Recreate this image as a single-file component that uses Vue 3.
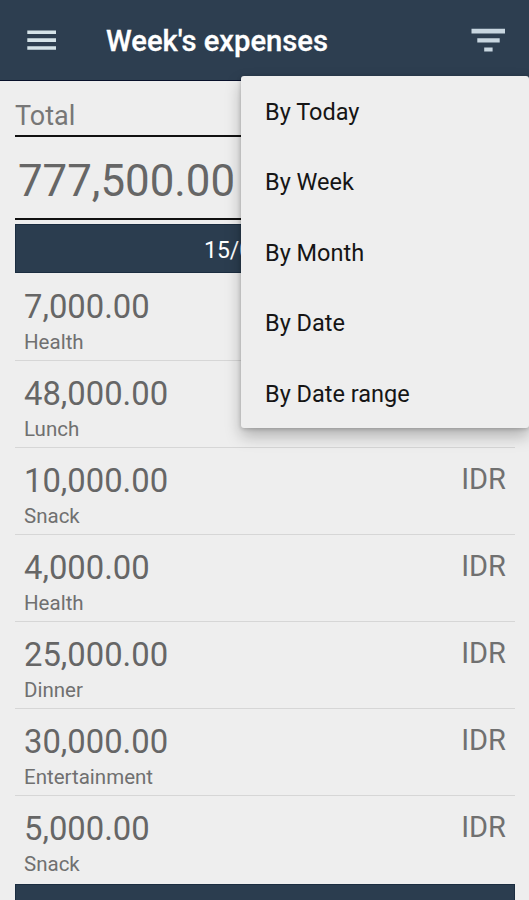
<script setup>
  import { ref } from 'vue';

  const showMenu = ref(true);

  const filters = ['By Today', 'By Week', 'By Month', 'By Date', 'By Date range'];

  const total = '777,500.00';
  const date = '15/0';

  const expenses = ref([
    { id: 1, amount: '7,000.00', category: 'Health', currency: '' },
    { id: 2, amount: '48,000.00', category: 'Lunch', currency: '' },
    { id: 3, amount: '10,000.00', category: 'Snack', currency: 'IDR' },
    { id: 4, amount: '4,000.00', category: 'Health', currency: 'IDR' },
    { id: 5, amount: '25,000.00', category: 'Dinner', currency: 'IDR' },
    { id: 6, amount: '30,000.00', category: 'Entertainment', currency: 'IDR' },
    { id: 7, amount: '5,000.00', category: 'Snack', currency: 'IDR' }
  ]);

  const toggleMenu = () => {
    showMenu.value = !showMenu.value;
  };
</script>

<template>
  <div class="app">
    <header class="toolbar">
      <button class="icon-button nav-button">
        <svg viewBox="0 0 30 22" width="30" height="22">
          <path fill="#d5e3e8" d="M0.3 1.5h28.7v3.6h-28.7zM0.3 9.3h28.7v3.6h-28.7zM0.3 17.2h28.7v3.6h-28.7z" />
        </svg>
      </button>
      <h1 class="title">Week's expenses</h1>
      <button class="icon-button" @click="toggleMenu">
        <svg viewBox="0 0 34 24" width="34" height="24">
          <path fill="#c8d6e0" d="M0.5 0.8h33.5v4.6h-33.5zM6.3 10.2h22.4v4.3h-22.4zM13.2 19.6h8.4v3.9h-8.4z" />
        </svg>
      </button>
    </header>

    <main class="content">
      <div class="total-label">Total</div>
      <div class="total-amount">{{ total }}</div>
      <div class="date-bar">{{ date }}</div>
      <ul class="expense-list">
        <li v-for="item in expenses" :key="item.id" class="expense">
          <div class="expense-info">
            <span class="amount">{{ item.amount }}</span>
            <span class="category">{{ item.category }}</span>
          </div>
          <span class="currency">{{ item.currency }}</span>
        </li>
      </ul>
      <div class="date-bar"></div>
    </main>

    <ul v-if="showMenu" class="menu">
      <li v-for="filter in filters" :key="filter" class="menu-item" @click="toggleMenu">
        {{ filter }}
      </li>
    </ul>
  </div>
</template>

<style>
  body {
    margin: 0;
    background: #eeeeee;
  }
</style>

<style scoped>
  .app {
    position: relative;
    height: 900px;
    overflow: hidden;
    background: #eeeeee;
    font-family: Roboto, sans-serif;
    color: #666666;
  }

  .toolbar {
    display: flex;
    align-items: center;
    box-sizing: border-box;
    height: 81px;
    padding: 0 24px 0 27px;
    background: #2d3e50;
    border-bottom: 1px solid #08102a;
  }

  .icon-button {
    display: flex;
    padding: 0;
    border: none;
    background: none;
    cursor: pointer;
  }

  .nav-button {
    margin-right: 49px;
  }

  .title {
    flex: 1;
    margin: 2px 0 0;
    font-size: 29.2px;
    line-height: 34px;
    font-weight: 500;
    color: #ffffff;
    -webkit-text-stroke: 0.3px #ffffff;
  }

  .content {
    padding: 0 14px 0 15px;
  }

  .total-label {
    box-sizing: border-box;
    height: 56px;
    padding-top: 18px;
    font-size: 27px;
    line-height: 34px;
    color: #777777;
    border-bottom: 2px solid #111111;
  }

  .total-amount {
    box-sizing: border-box;
    height: 83px;
    padding: 17px 0 0 3px;
    font-size: 43.8px;
    line-height: 54px;
    border-bottom: 2px solid #111111;
  }

  .date-bar {
    box-sizing: border-box;
    height: 49px;
    margin-top: 4px;
    padding-left: 188px;
    font-size: 23px;
    line-height: 51px;
    color: #ffffff;
    background: #2b3d4f;
    border: 1px solid #1b2d40;
  }

  .expense-list {
    margin: 0;
    padding: 1px 0 0;
    list-style: none;
  }

  .expense {
    display: flex;
    justify-content: space-between;
    box-sizing: border-box;
    height: 87px;
    padding: 12px 9px 0 9px;
    border-bottom: 1px solid #d6d6d6;
  }

  .expense:last-child {
    height: 84px;
    border-bottom: none;
  }

  .expense-info {
    display: flex;
    flex-direction: column;
  }

  .amount {
    font-size: 32.8px;
    line-height: 42px;
  }

  .category {
    font-size: 20.5px;
    line-height: 29px;
    color: #707070;
  }

  .currency {
    font-size: 29px;
    line-height: 39px;
    color: #707070;
  }

  /* dropdown over the list */
  .menu {
    position: absolute;
    top: 76px;
    right: 0;
    box-sizing: border-box;
    width: 288px;
    height: 352px;
    margin: 0;
    padding: 0;
    list-style: none;
    background: #eeeeee;
    border-radius: 3px;
    box-shadow: 0 8px 16px rgba(0, 0, 0, 0.26), 0 1px 4px rgba(0, 0, 0, 0.2);
  }

  .menu-item {
    height: 70.4px;
    padding-left: 24px;
    font-size: 23.5px;
    line-height: 72px;
    color: #151515;
    cursor: pointer;
  }
</style>
